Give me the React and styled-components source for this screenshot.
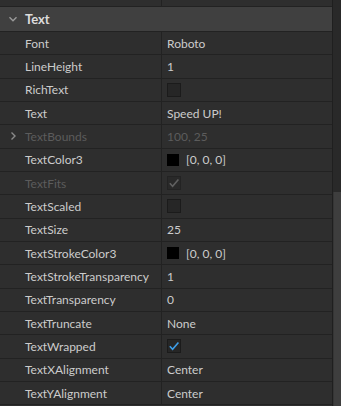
import React from "react";
import styled, { createGlobalStyle } from "styled-components";

const GlobalStyle = createGlobalStyle`
  html, body {
    margin: 0;
    padding: 0;
    background: #2e2e2e;
    overflow: hidden;
  }
`;

const Frame = styled.div`
  width: 341px;
  height: 406px;
  display: flex;
  background: #2e2e2e;
  font-family: "Lato", "Noto Sans", sans-serif;
  font-size: 12px;
  overflow: hidden;
`;

const List = styled.div`
  flex: 1;
  display: flex;
  flex-direction: column;
`;

const Scrollbar = styled.div`
  width: 8px;
  border-left: 1px solid #1f1f1f;
  background: #292929;
  display: flex;
  flex-direction: column;
`;

const Thumb = styled.div`
  margin-top: 192px;
  flex: 1;
  background: #3e3e3e;
  border-left: 1px solid #353535;
`;

const Row = styled.div`
  height: ${(p) => p.$h || "23.33px"};
  flex-shrink: 0;
  display: grid;
  grid-template-columns: 162px 1fr;
  border-bottom: 1px solid #222222;
  box-sizing: border-box;
  align-items: center;
`;

const Header = styled.div`
  height: 25px;
  flex-shrink: 0;
  display: flex;
  align-items: center;
  background: #404040;
  border-bottom: 1px solid #222222;
  box-sizing: border-box;
  color: #dcdcdc;
  font-weight: 700;
  font-size: 13px;
`;

const Toggle = styled.div`
  width: 25px;
  display: flex;
  justify-content: center;
  align-items: center;
`;

const Label = styled.div`
  height: 100%;
  display: flex;
  align-items: center;
  border-right: 1px solid #222222;
  box-sizing: border-box;
  color: ${(p) => (p.$disabled ? "#5c5c5c" : "#cccccc")};
  white-space: nowrap;
  overflow: hidden;
`;

const Value = styled.div`
  display: flex;
  align-items: center;
  gap: 7px;
  padding-left: 5px;
  color: ${(p) => (p.$disabled ? "#5c5c5c" : "#cccccc")};
  white-space: nowrap;
`;

const Box = styled.div`
  width: 14px;
  height: 14px;
  box-sizing: border-box;
  background: #262626;
  border: 1px solid #1b1b1b;
  display: flex;
  align-items: center;
  justify-content: center;
  opacity: ${(p) => (p.$disabled ? 0.55 : 1)};
`;

const Swatch = styled.div`
  width: 12px;
  height: 12px;
  background: #000;
`;

const Chevron = ({ down, color }) => (
  <svg width="10" height="10" viewBox="0 0 10 10">
    <path
      d={down ? "M1.5 3.2 L5 6.7 L8.5 3.2" : "M3.5 1.5 L7 5 L3.5 8.5"}
      fill="none"
      stroke={color}
      strokeWidth="1.4"
    />
  </svg>
);

const Check = ({ color }) => (
  <svg width="12" height="12" viewBox="0 0 12 12">
    <path d="M1.8 6.2 L4.6 9.2 L10.4 2.4" fill="none" stroke={color} strokeWidth="1.6" />
  </svg>
);

const rows = [
  { name: "Font", value: "Roboto" },
  { name: "LineHeight", value: "1" },
  { name: "RichText", box: true },
  { name: "Text", value: "Speed UP!" },
  { name: "TextBounds", value: "100, 25", disabled: true, expand: true },
  { name: "TextColor3", color: "[0, 0, 0]" },
  { name: "TextFits", box: true, checked: true, disabled: true },
  { name: "TextScaled", box: true },
  { name: "TextSize", value: "25" },
  { name: "TextStrokeColor3", color: "[0, 0, 0]" },
  { name: "TextStrokeTransparency", value: "1" },
  { name: "TextTransparency", value: "0" },
  { name: "TextTruncate", value: "None" },
  { name: "TextWrapped", box: true, checked: true },
  { name: "TextXAlignment", value: "Center" },
  { name: "TextYAlignment", value: "Center" },
];

const PropertyRow = ({ row }) => (
  <Row>
    <Label $disabled={row.disabled}>
      <Toggle>{row.expand && <Chevron color="#8a8a8a" />}</Toggle>
      {row.name}
    </Label>
    <Value $disabled={row.disabled}>
      {row.box && (
        <Box $disabled={row.disabled}>
          {row.checked && <Check color={row.disabled ? "#8a8a8a" : "#3d9ee9"} />}
        </Box>
      )}
      {row.color && (
        <>
          <Swatch />
          {row.color}
        </>
      )}
      {row.value}
    </Value>
  </Row>
);

export default function App() {
  return (
    <Frame>
      <GlobalStyle />
      <List>
        <Row $h="7px">
          <Label />
          <Value />
        </Row>
        <Header>
          <Toggle>
            <Chevron down color="#9a9a9a" />
          </Toggle>
          Text
        </Header>
        {rows.map((r) => (
          <PropertyRow key={r.name} row={r} />
        ))}
      </List>
      <Scrollbar>
        <Thumb />
      </Scrollbar>
    </Frame>
  );
}
